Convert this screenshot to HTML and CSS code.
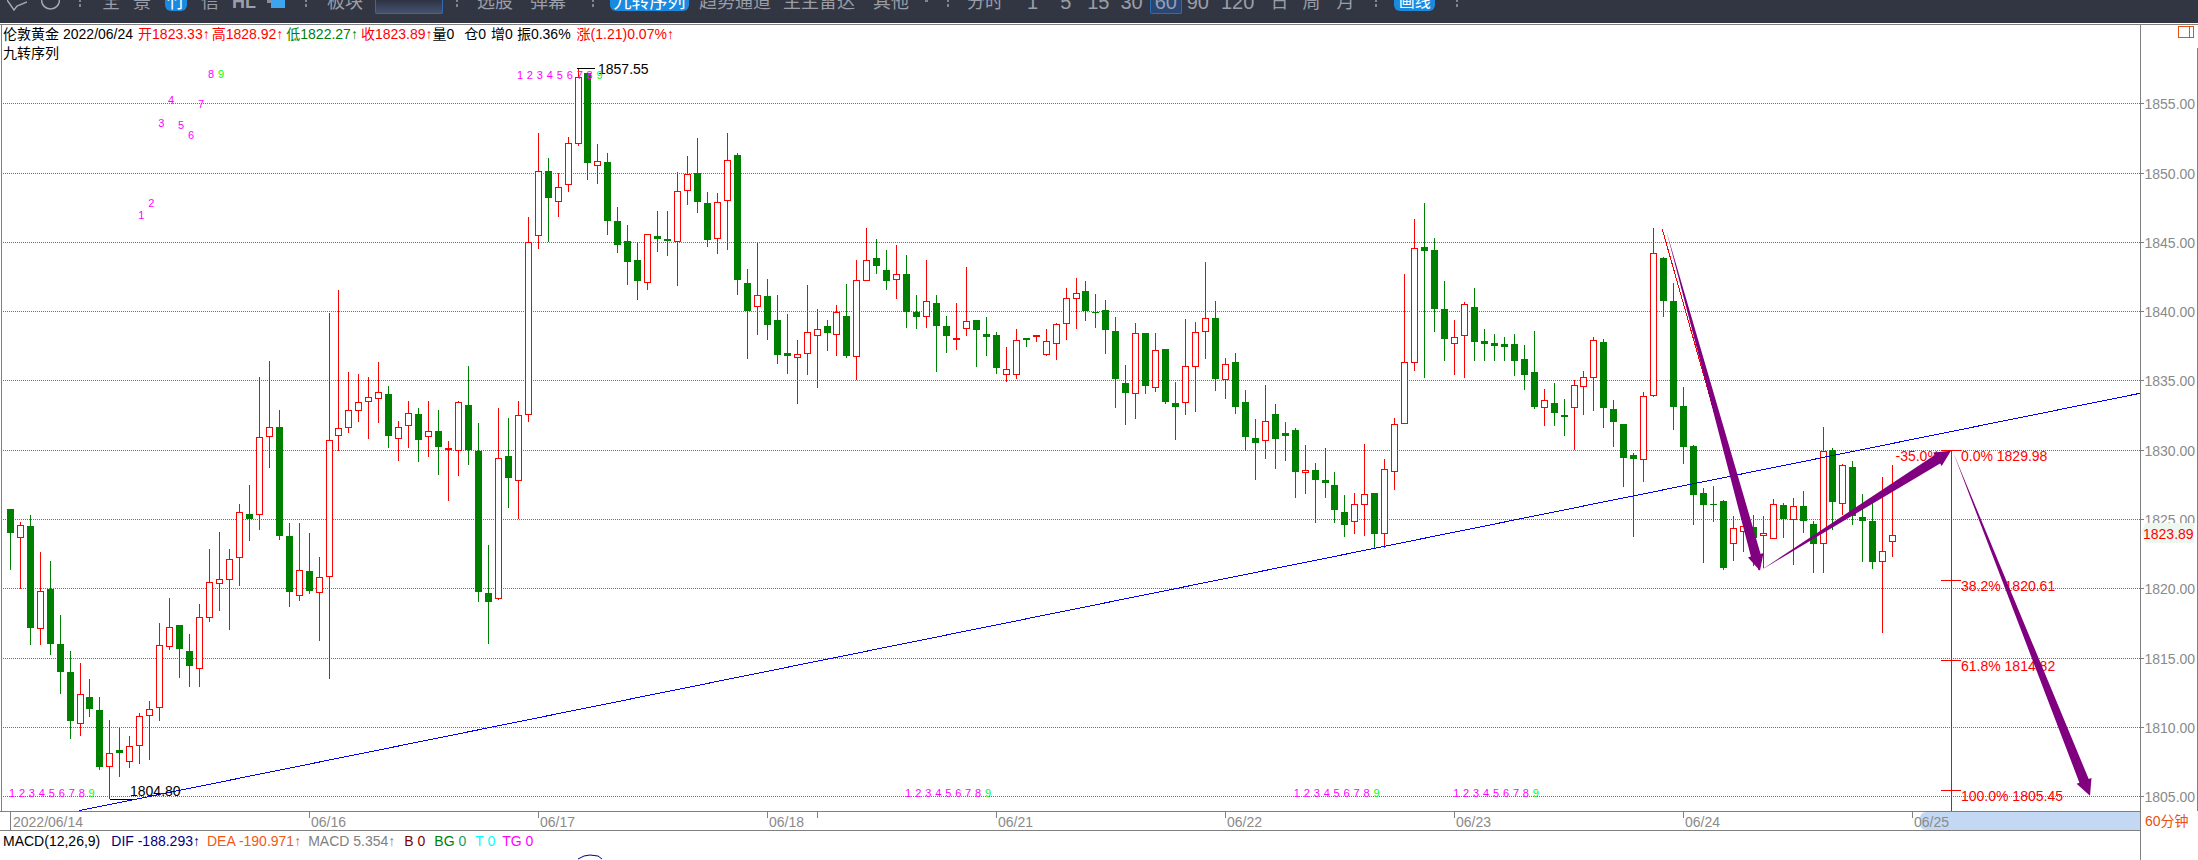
FILE: index.html
```html
<!DOCTYPE html>
<html lang="zh-CN">
<head>
  <meta charset="UTF-8">
  <title>伦敦黄金 60分钟</title>
  <link rel="stylesheet" href="styles.css">
</head>
<body>
  <div class="toolbar">
    <div class="tool-strip">
      <svg class="nav-icon" width="20" height="18" viewBox="0 0 20 18"><path d="M0 7 L7 17 L10 13 L20 9"/></svg>
      <svg class="nav-icon m14" width="19" height="18" viewBox="0 0 19 18"><circle cx="9.5" cy="7" r="9"/></svg>
      <span class="sep m19"></span>
      <span class="m21">全</span>
      <span class="m13">景</span>
      <span class="pill pill-small m14">竹</span>
      <span class="m14">信</span>
      <span class="m13 tool-bold">HL</span>
      <span class="color-mark m14"><i></i><b></b></span>
      <span class="sep m20"></span>
      <span class="m20">板块</span>
      <span class="search-box m12"></span>
      <span class="sep m13"></span>
      <span class="m19">选股</span>
      <span class="m17">弹幕</span>
      <span class="sep m26"></span>
      <span class="pill pill-wide m16">九转序列</span>
      <span class="m10">趋势通道</span>
      <span class="m12">主主雷达</span>
      <span class="m18">其他</span>
      <span class="caret m16"></span>
      <span class="sep m19"></span>
      <span class="m18">分时</span>
      <span class="num m24">1</span>
      <span class="num m22">5</span>
      <span class="num m16">15</span>
      <span class="num m11">30</span>
      <span class="num period-on m7">60</span>
      <span class="num m5">90</span>
      <span class="num m12">120</span>
      <span class="m16">日</span>
      <span class="m14">周</span>
      <span class="m16">月</span>
      <span class="sep m21"></span>
      <span class="pill pill-draw m17">画线</span>
      <span class="sep m21"></span>
    </div>
  </div>

  <div class="workspace">
    <div class="chart-col">
      <div class="plot">
        <svg id="plot" class="plot-svg" width="2140" height="786" viewBox="0 25 2140 786"></svg>
        <div class="legend">
          <div class="legend-row">
            <span>伦敦黄金</span>
            <span class="m4">2022/06/24</span>
            <span class="up m5">开1823.33↑</span>
            <span class="up m2">高1828.92↑</span>
            <span class="down m3">低1822.27↑</span>
            <span class="up m3">收1823.89↑</span>
            <span>量0</span>
            <span class="m10">仓0</span>
            <span class="m5">增0</span>
            <span class="m4">振0.36%</span>
            <span class="up m6">涨(1.21)0.07%↑</span>
          </div>
          <div class="legend-row">九转序列</div>
        </div>
      </div>

      <div class="dates">
        <div class="date-first">2022/06/14</div>
        <div class="date">06/16</div>
        <div class="date">06/17</div>
        <div class="date">06/18<i class="date-extra"></i></div>
        <div class="date">06/21</div>
        <div class="date">06/22</div>
        <div class="date">06/23</div>
        <div class="date">06/24</div>
        <div class="date date-last">06/25</div>
        <div class="date-range"></div>
      </div>

      <div class="macd">
        <span>MACD(12,26,9)</span>
        <span class="c-dif m11">DIF -188.293↑</span>
        <span class="c-dea m7">DEA -190.971↑</span>
        <span class="c-macd m7">MACD 5.354↑</span>
        <span class="c-b m9">B 0</span>
        <span class="c-bg m9">BG <em>0</em></span>
        <span class="c-t m9">T 0</span>
        <span class="c-tg m7">TG 0</span>
        <svg class="macd-line" width="24" height="6" viewBox="0 0 24 6"><path d="M0 5 L6 2 L12 1 L20 2 L24 5"/></svg>
      </div>
    </div>

    <div class="axis-col">
      <svg id="axis" class="axis-svg" width="57" height="786" viewBox="2141 25 57 786"></svg>
      <div class="period-name">60分钟</div>
    </div>
  </div>

  <script src="chart.js"></script>
</body>
</html>
```

FILE: styles.css
```css
html, body {
  margin: 0;
  padding: 0;
}

body {
  width: 2198px;
  height: 860px;
  overflow: hidden;
  background-color: #fff;
  font-family: "Liberation Sans", "Noto Sans CJK SC", sans-serif;
  font-size: 14px;
  color: #000;
}

/* left gaps between toolbar and legend items */
.m2 { margin-left: 2px; }
.m3 { margin-left: 3px; }
.m4 { margin-left: 4px; }
.m5 { margin-left: 5px; }
.m6 { margin-left: 6px; }
.m7 { margin-left: 7px; }
.m9 { margin-left: 9px; }
.m10 { margin-left: 10px; }
.m11 { margin-left: 11px; }
.m12 { margin-left: 12px; }
.m13 { margin-left: 13px; }
.m14 { margin-left: 14px; }
.m16 { margin-left: 16px; }
.m17 { margin-left: 17px; }
.m18 { margin-left: 18px; }
.m19 { margin-left: 19px; }
.m20 { margin-left: 20px; }
.m21 { margin-left: 21px; }
.m22 { margin-left: 22px; }
.m24 { margin-left: 24px; }
.m26 { margin-left: 26px; }

/* top toolbar, the window cuts off the upper half of it */
.toolbar {
  height: 23px;
  overflow: hidden;
  background-color: #323642;
  border-bottom: 1px solid #fff;
}

.tool-strip {
  display: flex;
  align-items: flex-start;
  margin-top: -7px;
  padding-left: 7px;
  font-size: 18px;
  line-height: 18px;
  color: #9a9ea8;
  white-space: nowrap;
}

.nav-icon {
  flex: none;
  margin-top: 0;
}

.nav-icon path,
.nav-icon circle {
  fill: none;
  stroke: #a4a8b0;
  stroke-width: 1.5;
}

.sep {
  width: 2px;
  height: 15px;
  background: repeating-linear-gradient(#80848e 0 3px, transparent 3px 5px);
  background-position: 0 1px;
}

.caret {
  width: 3px;
  height: 9px;
  background: linear-gradient(transparent 7px, #80848e 7px);
}

.tool-bold {
  width: 21px;
  font-weight: bold;
}

.num {
  font-size: 20px;
}

.pill {
  height: 18px;
  color: #fff;
  text-align: center;
  background-color: #1a8ae0;
  border-radius: 0 0 6px 6px;
}

.pill-small {
  width: 22px;
}

.pill-wide {
  width: 79px;
}

.pill-draw {
  width: 41px;
  font-size: 16px;
}

.color-mark {
  display: flex;
  width: 18px;
  height: 15px;
}

.color-mark i {
  width: 4px;
  height: 10px;
  background-color: #8a8e96;
}

.color-mark b {
  width: 14px;
  height: 15px;
  background-color: #3fa4ee;
}

.search-box {
  box-sizing: border-box;
  width: 68px;
  height: 21px;
  background: linear-gradient(#2d3140 30%, #44526e);
  border: 1px solid #2d6cb5;
  border-top: none;
  border-radius: 2px;
}

.period-on {
  box-sizing: border-box;
  width: 32px;
  height: 21px;
  text-align: center;
  background-color: #2a4674;
  border: 1px solid #2d6cb5;
  border-top: none;
  border-radius: 2px;
}

/* layout of the chart window */
.workspace {
  display: flex;
  height: 835px;
  border-top: 1px solid #808080;
}

.chart-col {
  flex: none;
  width: 2140px;
}

.axis-col {
  flex: none;
  width: 57px;
  border-left: 1px solid #808080;
}

.plot {
  position: relative;
  height: 786px;
}

.plot-svg,
.axis-svg {
  display: block;
}

.legend {
  position: absolute;
  top: 0;
  left: 3px;
  line-height: 19px;
}

.legend-row {
  display: flex;
  white-space: nowrap;
}

.up { color: #f00; }
.down { color: #008000; }

/* date axis */
.dates {
  position: relative;
  display: flex;
  height: 18px;
  line-height: 20px;
  color: #8a8a8a;
  border-top: 1px solid #808080;
  border-bottom: 1px solid #808080;
}

.date-first {
  flex: none;
  box-sizing: border-box;
  width: 299px;
  margin-left: 10px;
  padding-left: 2px;
  border-left: 1px solid #808080;
}

.date {
  position: relative;
  z-index: 1;
  flex: none;
  box-sizing: border-box;
  width: 229px;
  padding-left: 2px;
}

.date::before,
.date-extra {
  content: "";
  position: absolute;
  top: 0;
  left: 0;
  width: 1px;
  height: 6px;
  background-color: #808080;
}

.date-extra {
  left: 50px;
}

.date-last {
  width: 228px;
}

.date-range {
  position: absolute;
  top: 0;
  right: 0;
  width: 220px;
  height: 18px;
  background-color: #c3d8f2;
  border-radius: 6px 0 0 6px;
}

/* indicator line under the dates */
.macd {
  position: relative;
  display: flex;
  height: 29px;
  padding-left: 3px;
  line-height: 20px;
  white-space: nowrap;
}

.macd em {
  font-style: normal;
  color: #1aa060;
}

.c-dif { color: #000080; }
.c-dea { color: #f05a14; }
.c-macd { color: #808080; }
.c-b { color: #800000; }
.c-bg { color: #008000; }
.c-t { color: #0ff; }
.c-tg { color: #f0f; }

.macd-line {
  position: absolute;
  top: 23px;
  left: 578px;
}

.macd-line path {
  fill: none;
  stroke: #000080;
}

.period-name {
  height: 20px;
  padding-left: 4px;
  line-height: 20px;
  color: #e8500f;
}

/* svg pieces drawn from chart.js */
.grid {
  stroke: #707070;
  stroke-dasharray: 1 1;
  shape-rendering: crispEdges;
}

.trend {
  fill: none;
  stroke: #00f;
  stroke-width: 1;
  shape-rendering: crispEdges;
}

.wick-up { fill: #f00; }
.wick-down, .body-down { fill: #008000; }

.body-up {
  fill: #fff;
  stroke: #f00;
  stroke-width: 1;
  shape-rendering: crispEdges;
}

.wick-up, .wick-down, .body-down {
  shape-rendering: crispEdges;
}

.fib {
  fill: none;
  stroke: #f00;
  stroke-width: 1;
  shape-rendering: crispEdges;
}

.fib-trail {
  fill: none;
  stroke: #f00;
  stroke-width: 1;
  shape-rendering: crispEdges;
}

.fib-text {
  fill: #f00;
  font-size: 14px;
}

.arrow {
  fill: #800080;
}

.extreme {
  fill: #000;
  font-size: 14px;
}

.extreme-line {
  stroke: #000;
  shape-rendering: crispEdges;
}

.seq {
  fill: #f0f;
  font-size: 11px;
  text-anchor: middle;
}

.seq-last {
  fill: #0f0;
}

.price {
  fill: #8a8a8a;
  font-size: 14px;
}

.price-tick,
.edge-line {
  stroke: #808080;
  shape-rendering: crispEdges;
}

.price-bg {
  fill: #edf7ee;
}

.price-now {
  fill: #f00;
  font-size: 14px;
}

.corner-box {
  fill: none;
  stroke: #e8500f;
  shape-rendering: crispEdges;
}
```

FILE: chart.js
```js
// [type, wick top, body top, body bottom, wick bottom], all in page pixels
const candles = [
  ['d',509,509,533,570], ['u',522,525,537,589], ['d',515,526,628,645], ['u',552,591,628,645],
  ['d',561,589,644,655], ['d',615,644,672,694], ['d',651,672,721,739], ['u',663,694,723,736],
  ['d',679,697,709,717], ['d',697,710,767,770], ['u',720,753,766,799], ['d',728,750,753,777],
  ['u',736,746,761,768], ['u',713,716,745,764], ['u',701,709,715,760], ['u',623,645,707,721],
  ['u',598,627,646,650], ['d',625,625,649,678], ['d',634,651,666,687], ['u',604,617,668,687],
  ['u',549,582,617,622], ['u',532,579,583,611], ['u',549,559,579,630], ['u',504,512,557,586],
  ['d',485,514,519,541], ['u',377,437,514,530], ['u',361,427,436,468], ['d',410,427,536,540],
  ['d',523,536,592,607], ['u',523,570,595,601], ['d',533,571,591,594], ['u',557,577,592,641],
  ['u',313,440,576,679], ['u',290,428,435,451], ['u',372,410,427,433], ['u',374,402,410,422],
  ['u',377,397,401,439], ['u',362,392,398,423], ['d',386,394,436,448], ['u',421,427,438,461],
  ['u',401,413,425,448], ['d',408,414,440,462], ['u',401,431,436,457], ['d',410,431,447,475],
  ['u',441,448,449,501], ['u',401,402,450,476], ['d',366,405,450,465], ['d',423,451,592,602],
  ['d',545,593,602,644], ['u',408,458,598,600], ['d',418,456,478,508], ['u',401,415,480,519],
  ['u',217,242,414,422], ['u',133,171,235,249], ['d',158,171,198,242], ['u',173,187,201,217],
  ['u',137,143,184,192], ['u',68,77,143,146], ['d',73,73,163,180], ['u',144,161,165,184],
  ['d',153,162,221,235], ['d',207,221,245,253], ['d',225,241,262,285], ['d',242,260,281,300],
  ['u',234,234,282,290], ['d',211,236,239,252], ['d',211,239,241,256], ['u',172,191,241,286],
  ['u',156,174,190,205], ['d',138,173,202,213], ['d',192,203,240,247], ['u',193,202,238,254],
  ['u',133,160,200,250], ['d',153,155,280,295], ['d',269,283,311,359], ['u',243,295,306,335],
  ['d',279,296,325,340], ['d',295,320,355,364], ['d',314,353,356,374], ['u',340,354,357,404],
  ['u',285,332,353,375], ['u',309,329,335,388], ['d',320,326,333,351], ['u',305,312,334,356],
  ['d',284,316,356,358], ['u',260,280,356,380], ['u',228,260,280,280], ['d',239,258,266,274],
  ['d',250,270,281,290], ['u',245,274,279,299], ['d',255,274,312,328], ['d',295,312,317,329],
  ['u',260,301,316,328], ['d',295,303,326,372], ['d',316,326,336,353], ['u',303,338,339,350],
  ['u',267,321,328,336], ['d',320,320,330,367], ['d',317,334,337,356], ['d',332,335,368,374],
  ['u',347,369,374,382], ['u',329,340,374,379], ['d',338,338,340,347], ['u',335,335,336,342],
  ['u',329,341,354,356], ['u',323,324,343,360], ['u',288,298,323,340], ['u',278,293,298,329],
  ['d',281,291,311,321], ['d',294,312,313,328], ['d',300,310,330,354], ['d',317,331,379,408],
  ['d',365,383,393,425], ['u',323,333,393,419], ['d',333,333,386,394], ['u',333,350,387,392],
  ['d',349,349,402,404], ['d',382,403,407,440], ['u',319,366,402,415], ['u',322,332,366,412],
  ['u',262,318,331,359], ['d',301,318,379,391], ['u',358,364,379,399], ['d',353,362,407,414],
  ['d',390,402,437,451], ['d',419,438,443,480], ['u',385,421,440,459], ['d',404,414,439,469],
  ['d',422,433,436,461], ['d',428,430,472,498], ['u',445,470,472,494], ['d',463,470,480,523],
  ['d',448,480,483,498], ['d',472,485,510,523], ['d',495,512,525,537], ['u',493,504,521,534],
  ['u',444,494,504,536], ['d',493,493,534,548], ['u',459,469,533,548], ['u',418,424,471,490],
  ['u',274,362,423,424], ['u',219,248,362,371], ['d',203,247,251,378], ['d',238,250,309,332],
  ['d',281,309,339,361], ['u',320,337,343,375], ['u',302,304,335,378], ['d',288,307,342,361],
  ['d',329,341,344,361], ['d',334,343,346,361], ['d',337,344,347,361], ['d',334,344,361,376],
  ['d',345,359,375,390], ['d',331,372,407,409], ['u',389,400,407,426], ['d',383,403,413,426],
  ['d',399,415,417,436], ['u',380,385,407,450], ['u',371,377,386,415], ['u',337,340,377,411],
  ['d',339,342,408,428], ['d',400,409,422,447], ['d',424,424,458,487], ['d',453,455,459,537],
  ['u',392,396,459,482], ['u',228,253,395,397], ['d',257,258,301,317], ['d',283,301,407,430],
  ['d',387,406,447,464], ['d',445,446,495,525], ['d',488,493,505,563], ['d',486,504,505,522],
  ['d',500,501,568,570], ['u',516,528,543,561], ['u',517,526,531,552], ['d',515,527,538,566],
  ['u',516,533,535,568], ['u',499,504,538,538], ['d',503,505,519,538], ['u',498,506,519,565],
  ['d',491,506,521,533], ['d',521,524,544,573], ['u',427,451,543,573], ['d',448,450,502,530],
  ['u',464,465,503,515], ['d',461,467,516,525], ['d',494,517,521,562], ['d',503,521,562,569],
  ['u',477,551,561,633], ['u',465,535,541,557]
];

const STEP = 9.96;
const gridY = [103, 173, 242, 311, 380, 450, 519, 588, 658, 727, 796];

function candleX(i) {
  return 10.3 + STEP * i;
}

function drawCandle(c, i) {
  const x = Math.floor(candleX(i));
  const [type, top, bodyTop, bodyBottom, bottom] = c;
  const height = bottom - top;
  if (type === 'u') {
    const bodyH = Math.max(bodyBottom - bodyTop, 1);
    return `<rect class="wick-up" x="${x}" y="${top}" width="1" height="${height}"/>` +
      `<rect class="body-up" x="${x - 2.5}" y="${bodyTop + 0.5}" width="6" height="${bodyH}"/>`;
  }
  return `<rect class="wick-down" x="${x}" y="${top}" width="1" height="${height}"/>` +
    `<rect class="body-down" x="${x - 3}" y="${bodyTop}" width="7" height="${Math.max(bodyBottom - bodyTop, 1)}"/>`;
}

// thin at the tail, widening up to the head
function drawArrow(x0, y0, x1, y1) {
  const len = Math.hypot(x1 - x0, y1 - y0);
  const ux = (x1 - x0) / len;
  const uy = (y1 - y0) / len;
  const nx = -uy;
  const ny = ux;
  const bx = x1 - ux * 16;
  const by = y1 - uy * 16;
  const pts = [
    [x0, y0],
    [bx + nx * 5, by + ny * 5],
    [bx + nx * 8, by + ny * 8],
    [x1, y1],
    [bx - nx * 8, by - ny * 8],
    [bx - nx * 5, by - ny * 5]
  ];
  return `<polygon class="arrow" points="${pts.map(p => p[0].toFixed(1) + ',' + p[1].toFixed(1)).join(' ')}"/>`;
}

function seqText(x, y, n) {
  const cls = n === 9 ? 'seq seq-last' : 'seq';
  return `<text class="${cls}" x="${x}" y="${y + 4}">${n}</text>`;
}

function seqRow(start, y) {
  let out = '';
  for (let n = 1; n <= 9; n++) {
    out += seqText(candleX(start + n - 1) + 1.7, y, n);
  }
  return out;
}

function fibLevel(y, label) {
  return `<line class="fib" x1="1941" x2="1961" y1="${y + 0.5}" y2="${y + 0.5}"/>` +
    `<text class="fib-text" x="1961" y="${y + 11}">${label}</text>`;
}

let plot = '';

gridY.forEach(y => {
  plot += `<line class="grid" x1="3" x2="2140" y1="${y + 0.5}" y2="${y + 0.5}"/>`;
});
plot += `<line class="edge-line" x1="1.5" x2="1.5" y1="25" y2="811"/>`;

plot += candles.map(drawCandle).join('');

plot += `<line class="trend" x1="79" y1="810.7" x2="2140" y2="393.3"/>`;

// high and low of the range
plot += `<line class="extreme-line" x1="577" x2="595" y1="68.5" y2="68.5"/>`;
plot += `<text class="extreme" x="598" y="74">1857.55</text>`;
plot += `<line class="extreme-line" x1="110" x2="132" y1="799.5" y2="799.5"/>`;
plot += `<text class="extreme" x="130" y="796">1804.80</text>`;

// nine count
plot += seqRow(51, 75) + seqRow(0, 793) + seqRow(90, 793) + seqRow(129, 793) + seqRow(145, 793);
[215, 203, 123, 100, 125, 135, 104, 74, 74].forEach((y, idx) => {
  plot += seqText(candleX(13 + idx) + 1.5, y, idx + 1);
});

// fibonacci tool
plot += `<line class="fib-trail" x1="1662.3" y1="229.3" x2="1759" y2="570"/>`;
plot += `<line class="fib" x1="1951.5" x2="1951.5" y1="450" y2="811"/>`;
plot += fibLevel(450, '0.0% 1829.98');
plot += fibLevel(580, '38.2% 1820.61');
plot += fibLevel(660, '61.8% 1814.82');
plot += fibLevel(790, '100.0% 1805.45');
plot += `<text class="fib-text" x="1895.5" y="461">-35.0%</text>`;

plot += drawArrow(1666.3, 230.7, 1760, 570.7);
plot += drawArrow(1760, 570.7, 1951, 450.7);
plot += drawArrow(1953, 452, 2090, 795.7);

document.getElementById('plot').innerHTML = plot;

// right hand price scale
let axis = `<line class="edge-line" x1="2197.5" x2="2197.5" y1="48" y2="811"/>`;
axis += `<rect class="corner-box" x="2178.5" y="26.5" width="15" height="11"/>`;
axis += `<line class="corner-box" x1="2189.5" x2="2189.5" y1="26.5" y2="37.5"/>`;

gridY.forEach((y, i) => {
  axis += `<line class="price-tick" x1="2141" x2="2144" y1="${y + 0.5}" y2="${y + 0.5}"/>`;
  axis += `<text class="price" x="2144.5" y="${y + 6}">${(1855 - i * 5).toFixed(2)}</text>`;
});

axis += `<polygon class="price-bg" points="2141,532 2146,523 2194,523 2194,543 2146,543"/>`;
axis += `<text class="price-now" x="2143" y="539">1823.89</text>`;

document.getElementById('axis').innerHTML = axis;
```
